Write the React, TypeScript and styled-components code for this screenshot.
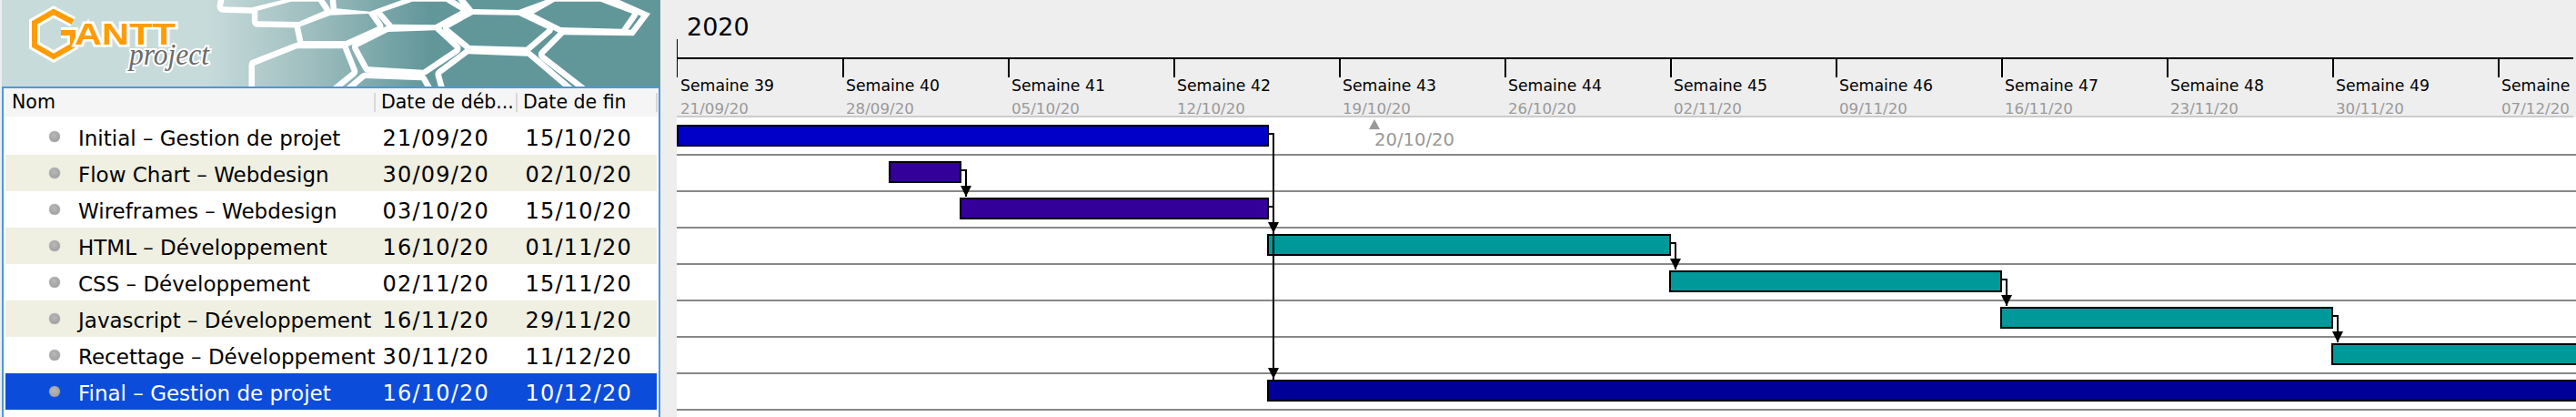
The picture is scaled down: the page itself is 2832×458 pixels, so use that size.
import React from "react";
import styled, { createGlobalStyle } from "styled-components";

const GlobalStyle = createGlobalStyle`
  html, body { margin: 0; padding: 0; background: #eeeeee; }
  body { font-family: "DejaVu Sans", sans-serif; overflow: hidden; }
  #root { width: 2832px; height: 458px; }
`;

const Page = styled.div`
  display: flex;
  width: 2832px;
  height: 458px;
  overflow: hidden;
  background: #eeeeee;
  color: #000;
`;

const LeftColumn = styled.div`
  display: flex;
  flex-direction: column;
  flex: 0 0 744px;
  padding: 0 18px 0 2px;
  box-sizing: border-box;
`;

const Banner = styled.svg`
  display: block;
  flex: 0 0 95px;
  width: 724px;
  height: 95px;
`;

const TablePanel = styled.div`
  flex: 1;
  display: flex;
  flex-direction: column;
  background: #fff;
  border: 2px solid #4a98e0;
  border-bottom: 0;
`;

const HeaderRow = styled.div`
  display: grid;
  grid-template-columns: 407px 156px 157px;
  align-items: center;
  height: 31px;
  background: #f5f5f5;
  font-size: 20.5px;
`;

const HeaderCell = styled.div<{ $sep?: boolean; $end?: boolean }>`
  height: 21px;
  line-height: 21px;
  box-sizing: border-box;
  padding-left: ${(p) => (p.$sep ? "6px" : "9px")};
  border-left: ${(p) => (p.$sep ? "2px solid #d8d8d8" : "0")};
  border-right: ${(p) => (p.$end ? "2px solid #d8d8d8" : "0")};
  margin-right: ${(p) => (p.$end ? "1px" : "0")};
  white-space: nowrap;
`;

const TaskList = styled.div`
  display: flex;
  flex-direction: column;
  padding: 2px 2px 0;
`;

const TaskRow = styled.div<{ $alt?: boolean; $selected?: boolean }>`
  display: grid;
  grid-template-columns: 405px 156px 155px;
  align-items: center;
  height: 40px;
  background: ${(p) => (p.$selected ? "#0b4cdb" : p.$alt ? "#efefe2" : "#fff")};
  color: ${(p) => (p.$selected ? "#fff" : "#000")};
`;

const TaskName = styled.div`
  display: flex;
  align-items: center;
  gap: 20px;
  padding-left: 48px;
  white-space: nowrap;
`;

const TaskLabel = styled.span`
  font-size: 23px;
  line-height: 28px;
  padding-top: 3px;
`;

const Bullet = styled.span`
  flex: 0 0 12px;
  width: 12px;
  height: 12px;
  border-radius: 50%;
  background: radial-gradient(circle at 45% 40%, #b8b8b8, #989898);
  box-shadow: 0 0 1px #8a8a8a;
`;

const DateCell = styled.div<{ $pad: number }>`
  font-size: 24px;
  line-height: 28px;
  letter-spacing: 1.2px;
  text-align: right;
  padding: 3px ${(p) => p.$pad}px 0 0;
  white-space: nowrap;
`;

const Chart = styled.div`
  flex: 1;
  min-width: 0;
  display: flex;
  flex-direction: column;
  overflow: hidden;
`;

const ChartHeader = styled.div`
  flex: 0 0 129px;
  background: #eeeeee;
`;

const YearRow = styled.div`
  position: relative;
  height: 63px;
  padding-left: 11px;
  font-size: 27px;
  line-height: 60px;
  &::after {
    content: "";
    position: absolute;
    left: 0;
    top: 43px;
    width: 1px;
    height: 20px;
    background: #000;
  }
`;

const WeekScale = styled.div`
  display: flex;
  box-sizing: border-box;
  height: 66px;
  border-top: 2px solid #000;
  border-bottom: 2px solid #cccccc;
  margin-right: 3px;
`;

const WeekCell = styled.div<{ $first?: boolean }>`
  position: relative;
  flex: 0 0 182px;
  padding: 17px 0 0 4px;
  box-sizing: border-box;
  white-space: nowrap;
  &::before {
    content: "";
    position: absolute;
    left: 0;
    top: 0;
    width: ${(p) => (p.$first ? "1px" : "2px")};
    height: 20px;
    background: #000;
  }
`;

const WeekName = styled.div`
  font-size: 17.3px;
  line-height: 24px;
`;

const WeekDate = styled.div`
  font-size: 16.7px;
  line-height: 20px;
  margin-top: 3px;
  color: #9a9a9a;
`;

const ChartBody = styled.div`
  position: relative;
  flex: 1;
  background: #fff;
  padding-top: 2px;
`;

const ChartRow = styled.div`
  position: relative;
  height: 40px;
  box-sizing: border-box;
  border-bottom: 2px solid #888888;
`;

const Bar = styled.div<{ $color: string }>`
  position: absolute;
  top: 6px;
  height: 24px;
  box-sizing: border-box;
  border: 2px solid #000;
  background: ${(p) => p.$color};
`;

const TodayMarker = styled.div`
  position: absolute;
  left: 761px;
  top: 2px;
  width: 12px;
  height: 11px;
  background: #999;
  clip-path: polygon(50% 0, 100% 100%, 0 100%);
`;

const TodayLabel = styled.div`
  position: absolute;
  left: 767px;
  top: 13px;
  font-size: 19.6px;
  line-height: 24px;
  color: #999;
`;

const Links = styled.svg`
  position: absolute;
  left: 0;
  top: 0;
  pointer-events: none;
`;

const tasks = [
  ["Initial – Gestion de projet", "21/09/20", "15/10/20"],
  ["Flow Chart – Webdesign", "30/09/20", "02/10/20"],
  ["Wireframes – Webdesign", "03/10/20", "15/10/20"],
  ["HTML – Développement", "16/10/20", "01/11/20"],
  ["CSS – Développement", "02/11/20", "15/11/20"],
  ["Javascript – Développement", "16/11/20", "29/11/20"],
  ["Recettage – Développement", "30/11/20", "11/12/20"],
  ["Final – Gestion de projet", "16/10/20", "10/12/20"],
];

const weeks = [
  ["39", "21/09/20"], ["40", "28/09/20"], ["41", "05/10/20"], ["42", "12/10/20"],
  ["43", "19/10/20"], ["44", "26/10/20"], ["45", "02/11/20"], ["46", "09/11/20"],
  ["47", "16/11/20"], ["48", "23/11/20"], ["49", "30/11/20"], ["50", "07/12/20"],
];

const bars = [
  { from: 744, to: 1395, color: "#0000c8" },
  { from: 977, to: 1057, color: "#330099" },
  { from: 1055, to: 1395, color: "#330099" },
  { from: 1393, to: 1837, color: "#009999" },
  { from: 1835, to: 2201, color: "#009999" },
  { from: 2199, to: 2565, color: "#009999" },
  { from: 2563, to: 2900, color: "#009999" },
  { from: 1393, to: 2900, color: "#000099" },
];

const links = [
  "M1395 147H1400V417",
  "M1395 227H1400",
  "M1057 187H1062V216",
  "M1837 267H1842V296",
  "M2201 307H2206V336",
  "M2565 347H2570V376",
];

const heads: [number, number][] = [
  [1400, 244], [1400, 404], [1062, 204], [1842, 284], [2206, 324], [2570, 364],
];

const cells = [
  "55,-30 230,-30 240,0 140,25 45,22",
  "160,35 270,5 360,5 380,35 295,72 160,70",
  "300,88 400,50 525,45 555,88 450,135 310,135",
  "150,215 290,160 440,160 470,235 390,300 150,300",
  "490,155 590,105 745,100 810,160 705,230 525,220",
  "570,40 670,5 780,5 830,35 745,82 605,80",
  "790,92 870,48 1020,50 1115,95 1045,155 860,150",
  "1070,45 1140,5 1290,5 1395,45 1360,95 1160,90",
  "765,245 855,178 1050,185 1185,300 780,300",
  "1105,180 1170,115 1400,118 1455,45 1285,-30 1550,-30 1550,300 1260,300",
  "415,-30 635,-30 635,0 530,38 420,28",
  "820,-30 1110,-30 1110,0 1020,33 870,30",
  "465,300 515,258 700,265 720,300",
];

const toBanner = (pts: string) =>
  pts
    .split(" ")
    .map((p) => {
      const [x, y] = p.split(",").map(Number);
      return `${228 + x / 3},${y / 3}`;
    })
    .join(" ");

const Logo = () => (
  <Banner viewBox="0 0 724 95">
    <defs>
      <linearGradient id="bannerFade" gradientUnits="userSpaceOnUse" x1="225" y1="0" x2="470" y2="0">
        <stop offset="0" stopColor="#c8dbdb" />
        <stop offset="0.45" stopColor="#a0bfc0" />
        <stop offset="1" stopColor="#62979a" />
      </linearGradient>
    </defs>
    <rect width="724" height="95" fill="url(#bannerFade)" />
    {cells.map((c) => (
      <polygon key={`s${c}`} points={toBanner(c)} fill="#fff" stroke="#fff" strokeWidth="13" strokeLinejoin="round" />
    ))}
    {cells.map((c) => (
      <polygon key={`f${c}`} points={toBanner(c)} fill="url(#bannerFade)" />
    ))}
    <polyline
      points="78,24 57,13 36,25 36,50 57,62 78,50 78,36 65,36"
      fill="none"
      stroke="#fff"
      strokeWidth="12"
    />
    <polyline
      points="78,24 57,13 36,25 36,50 57,62 78,50 78,36 65,36"
      fill="none"
      stroke="#ff9d00"
      strokeWidth="6"
    />
    <text
      x="80"
      y="49"
      fontFamily="'Liberation Sans', sans-serif"
      fontWeight="700"
      fontSize="33"
      textLength="111"
      lengthAdjust="spacingAndGlyphs"
      fill="#ff9d00"
      stroke="#fff"
      strokeWidth="5"
      paintOrder="stroke"
    >
      ANTT
    </text>
    <text
      x="140"
      y="71"
      fontFamily="'Liberation Serif', serif"
      fontStyle="italic"
      fontSize="33"
      textLength="88"
      lengthAdjust="spacingAndGlyphs"
      fill="#6a6a6a"
      stroke="#fff"
      strokeWidth="4"
      paintOrder="stroke"
    >
      project
    </text>
  </Banner>
);

export default function App() {
  return (
    <Page>
      <GlobalStyle />
      <LeftColumn>
        <Logo />
        <TablePanel>
          <HeaderRow>
            <HeaderCell>Nom</HeaderCell>
            <HeaderCell $sep>Date de déb...</HeaderCell>
            <HeaderCell $sep $end>Date de fin</HeaderCell>
          </HeaderRow>
          <TaskList>
            {tasks.map(([name, start, end], i) => (
              <TaskRow key={name} $alt={i % 2 === 1} $selected={i === 7}>
                <TaskName>
                  <Bullet />
                  <TaskLabel>{name}</TaskLabel>
                </TaskName>
                <DateCell $pad={29}>{start}</DateCell>
                <DateCell $pad={27}>{end}</DateCell>
              </TaskRow>
            ))}
          </TaskList>
        </TablePanel>
      </LeftColumn>
      <Chart>
        <ChartHeader>
          <YearRow>2020</YearRow>
          <WeekScale>
            {weeks.map(([n, d], i) => (
              <WeekCell key={n} $first={i === 0}>
                <WeekName>Semaine {n}</WeekName>
                <WeekDate>{d}</WeekDate>
              </WeekCell>
            ))}
          </WeekScale>
        </ChartHeader>
        <ChartBody>
          {bars.map((b) => (
            <ChartRow key={`${b.from}-${b.to}`}>
              <Bar $color={b.color} style={{ left: b.from - 744, width: b.to - b.from }} />
            </ChartRow>
          ))}
          <TodayMarker />
          <TodayLabel>20/10/20</TodayLabel>
          <Links width="2088" height="329" viewBox="744 129 2088 329">
            {links.map((d) => (
              <path key={d} d={d} fill="none" stroke="#000" strokeWidth="2" shapeRendering="crispEdges" />
            ))}
            {heads.map(([x, y]) => (
              <polygon key={`${x}-${y}`} points={`${x - 6},${y} ${x + 6},${y} ${x},${y + 12}`} fill="#000" />
            ))}
          </Links>
        </ChartBody>
      </Chart>
    </Page>
  );
}
